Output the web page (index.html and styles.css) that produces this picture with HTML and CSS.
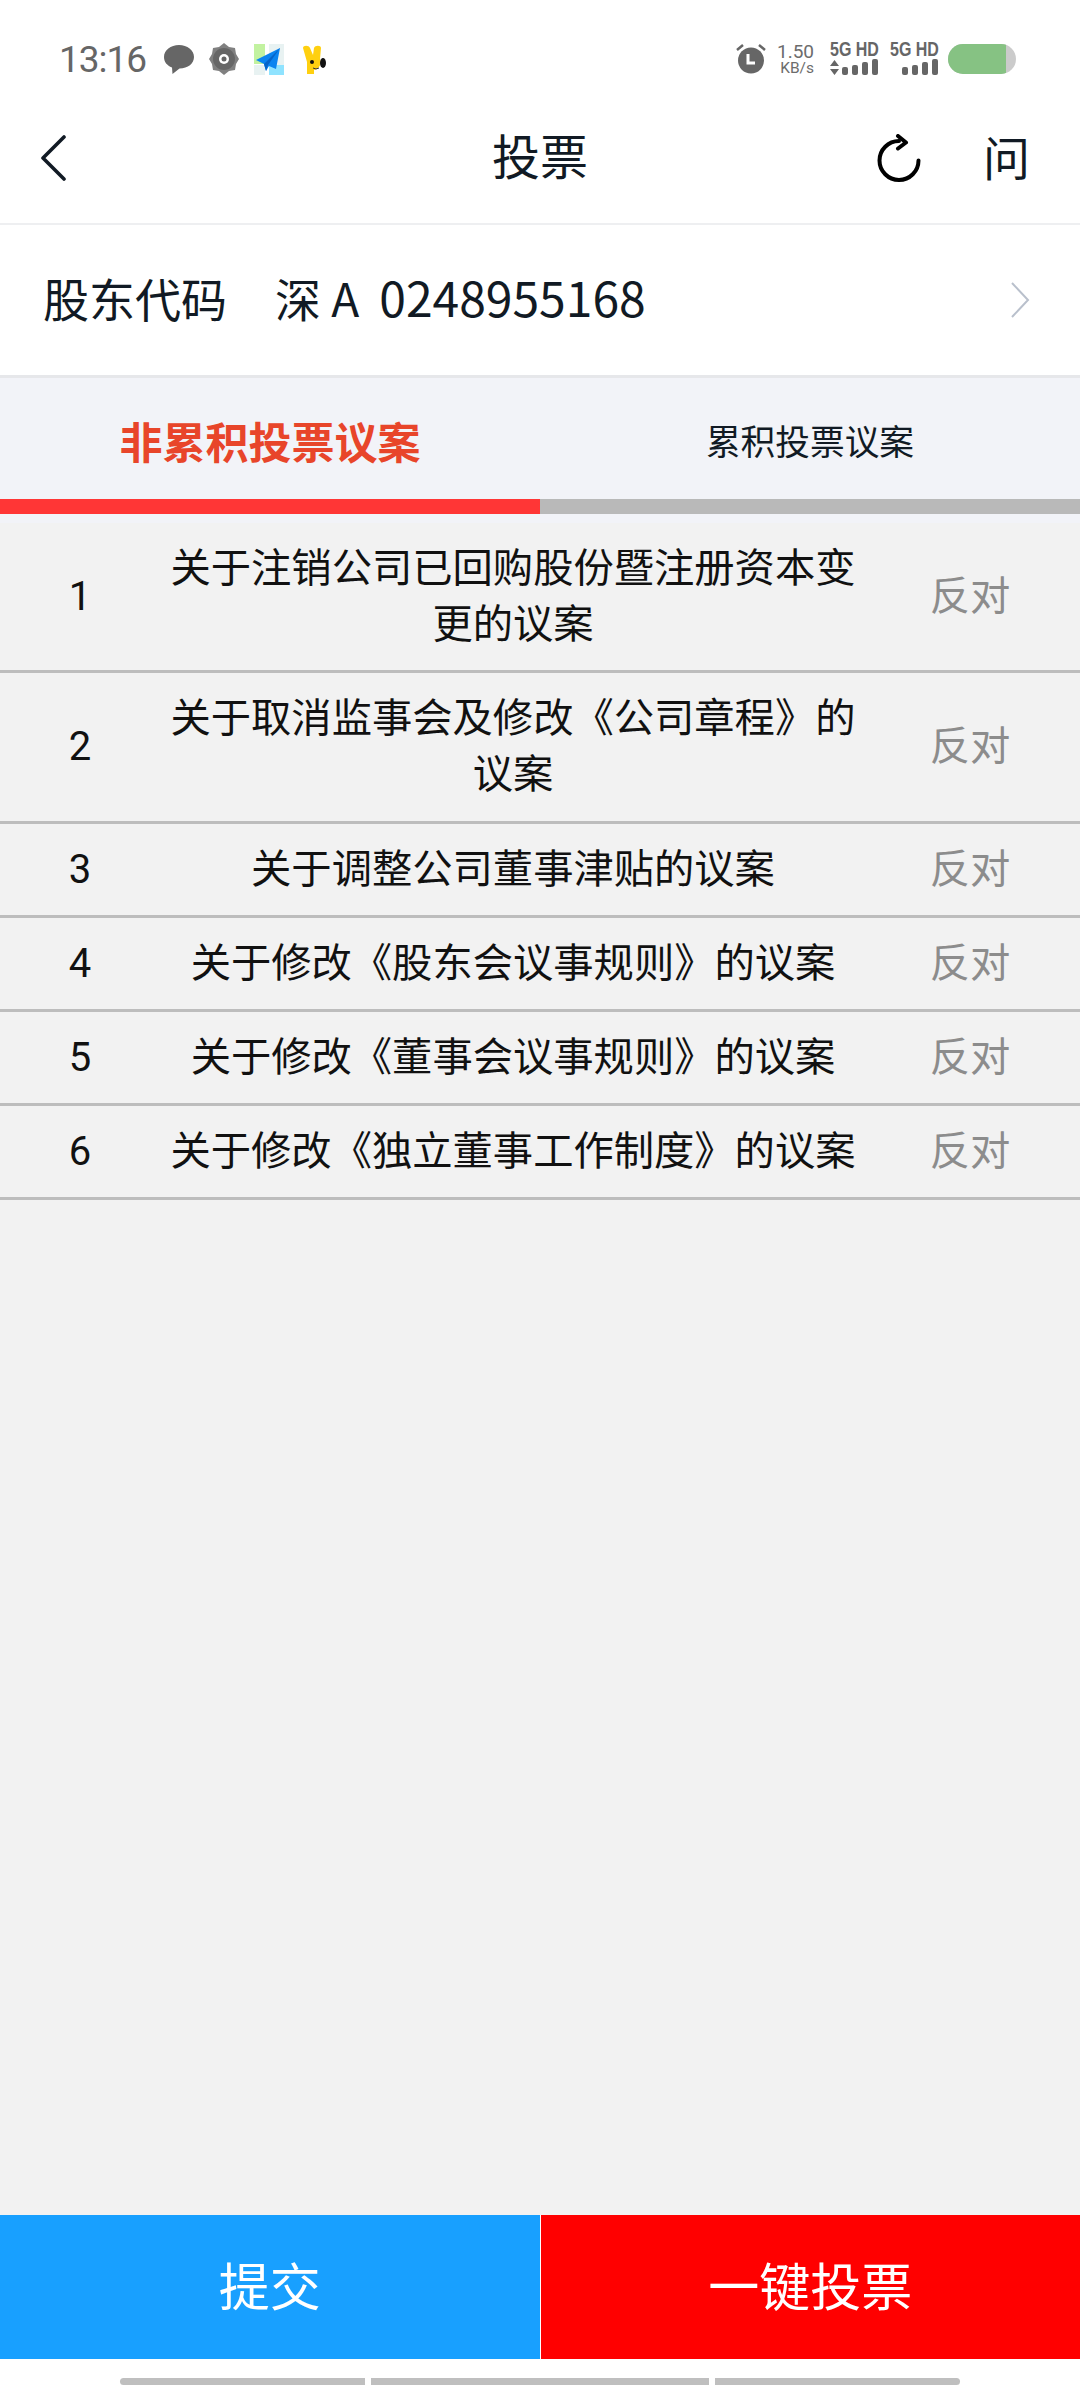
FILE: index.html
```html
<!DOCTYPE html>
<html lang="zh-CN">
<head>
    <meta charset="UTF-8">
    <meta name="viewport" content="width=device-width, initial-scale=1.0">
    <title>投票</title>
    <link rel="stylesheet" href="styles.css">
</head>
<body>
    <div class="status-bar">
        <div class="status-left">
            <span class="time">13:16</span>
            <svg class="ic-chat" width="30" height="29" viewBox="0 0 30 29"><path d="M15 0C6.700 0 0 5 0 12c0 5 3 8.500 8 10.500L8.500 29l7-5.500C24 23.500 30 18.500 30 12 30 5 23.300 0 15 0z" fill="#666"/></svg>
            <svg class="ic-gear" width="30" height="32" viewBox="0 0 30 32"><path d="M15 0l5 4 6 1 1 6 3 5-3 5-1 6-6 1-5 4-5-4-6-1-1-6-3-5 3-5 1-6 6-1z" fill="#808080"/><circle cx="15" cy="16" r="11" fill="#666"/><circle cx="15" cy="16" r="5" fill="#fff"/><circle cx="15" cy="16" r="2.500" fill="#666"/></svg>
            <svg class="ic-map" width="30" height="31" viewBox="0 0 30 31"><rect width="11" height="20" fill="#c2f2a0"/><rect x="15" width="15" height="21" fill="#e8f2f2"/><rect y="21" width="11" height="10" fill="#e8f2f2"/><rect x="15" y="21" width="15" height="10" fill="#8fe3ff"/><path d="M26 4L2 16l8 4 2 7 3-5 7 3z" fill="#0a84f0"/><path d="M26 4L10 20l2 7 2-6z" fill="#0664c8"/></svg>
            <svg class="ic-rabbit" width="23" height="29" viewBox="0 0 23 29"><path d="M0 3c0-3 6-3 7 0l3 7 1-7c1-3 7-3 7 0l-1 11c2 5-1 10-6 11v4H4V17z" fill="#ffd010"/><ellipse cx="20" cy="18" rx="3" ry="5" fill="#111"/><circle cx="9" cy="17" r="2" fill="#111"/><path d="M10 23q3 2 6 0" fill="none" stroke="#333" stroke-width="1"/></svg>
        </div>
        <div class="status-right">
            <svg width="30" height="30" viewBox="0 0 30 30"><circle cx="15" cy="16.500" r="13" fill="#666"/><path d="M12 10v9h7" fill="none" stroke="#fff" stroke-width="3"/><path d="M1 6l6-5M29 6l-6-5" stroke="#666" stroke-width="2.500"/></svg>
            <div class="speed"><span class="speed-num">1.50</span><span class="speed-unit">KB/s</span></div>
            <div class="sim sim-first">
                <span class="sim-label">5G HD</span>
                <div class="sim-row">
                    <svg width="9" height="15" viewBox="0 0 9 15"><path d="M4.500 0L9 6H0zM4.500 15L0 9h9z" fill="#666"/></svg>
                    <div class="signal"><i class="s1"></i><i class="s2"></i><i class="s3"></i><i class="s4"></i></div>
                </div>
            </div>
            <div class="sim">
                <span class="sim-label">5G HD</span>
                <div class="sim-row sim-end">
                    <div class="signal"><i class="s1"></i><i class="s2"></i><i class="s3"></i><i class="s4"></i></div>
                </div>
            </div>
            <div class="battery"><div class="battery-fill"></div></div>
        </div>
    </div>

    <div class="nav-bar">
        <svg class="back" width="26" height="46" viewBox="0 0 26 46"><path d="M24 2L3 23l21 21" fill="none" stroke="#111a24" stroke-width="3.600" stroke-linecap="round" stroke-linejoin="round"/></svg>
        <h1 class="nav-title">投票</h1>
        <div class="nav-right">
            <svg class="refresh" width="44" height="48" viewBox="0 0 44 48"><path d="M22 7A19.500 19.500 0 1 0 41.500 26.500" fill="none" stroke="#000" stroke-width="4" stroke-linecap="round"/><path d="M21 2l8 6.500-8 6" fill="none" stroke="#000" stroke-width="4" stroke-linecap="round" stroke-linejoin="round"/></svg>
            <span class="nav-help">问</span>
        </div>
    </div>

    <div class="account">
        <div class="account-text">
            <span class="account-label">股东代码</span>
            <span class="account-market">深 A</span>
            <span class="account-no">0248955168</span>
        </div>
        <svg class="more" width="20" height="36" viewBox="0 0 20 36"><path d="M2 1l16 17L2 35" fill="none" stroke="#b9c0cc" stroke-width="2"/></svg>
    </div>

    <div class="tabs">
        <div class="tab tab-active">非累积投票议案</div>
        <div class="tab">累积投票议案</div>
    </div>
    <div class="tab-line"><div class="tab-line-on"></div></div>

    <div class="list">
        <div class="row row-first">
            <span class="row-no">1</span>
            <span class="row-text">关于注销公司已回购股份暨注册资本变更的议案</span>
            <span class="row-vote">反对</span>
        </div>
        <div class="row row-tall">
            <span class="row-no">2</span>
            <span class="row-text">关于取消监事会及修改《公司章程》的议案</span>
            <span class="row-vote">反对</span>
        </div>
        <div class="row">
            <span class="row-no">3</span>
            <span class="row-text">关于调整公司董事津贴的议案</span>
            <span class="row-vote">反对</span>
        </div>
        <div class="row">
            <span class="row-no">4</span>
            <span class="row-text">关于修改《股东会议事规则》的议案</span>
            <span class="row-vote">反对</span>
        </div>
        <div class="row">
            <span class="row-no">5</span>
            <span class="row-text">关于修改《董事会议事规则》的议案</span>
            <span class="row-vote">反对</span>
        </div>
        <div class="row">
            <span class="row-no">6</span>
            <span class="row-text">关于修改《独立董事工作制度》的议案</span>
            <span class="row-vote">反对</span>
        </div>
    </div>

    <div class="actions">
        <div class="btn btn-submit">提交</div>
        <div class="btn btn-all">一键投票</div>
    </div>

    <div class="home-bar">
        <i class="home-a"></i><i class="home-b"></i><i class="home-c"></i>
    </div>
</body>
</html>
```

FILE: styles.css
```css
* {
    box-sizing: border-box;
}

body {
    font-family: "Noto Sans CJK SC", "Noto Sans", sans-serif;
    background-color: #fff;
    margin: 0;
    padding: 0;
    width: 1080px;
    height: 2388px;
    display: flex;
    flex-direction: column;
    color: #111a24;
}

.status-bar {
    height: 90px;
    padding: 44px 64px 0 59px;
    display: flex;
    justify-content: space-between;
    align-items: flex-start;
}

.status-left {
    display: flex;
    align-items: center;
    height: 30px;
}

.time {
    font-family: Roboto, sans-serif;
    font-size: 37px;
    letter-spacing: -1px;
    color: #666;
    width: 105px;
}

.ic-gear,
.ic-map {
    margin-left: 15px;
}

.ic-rabbit {
    margin-left: 19px;
}

.status-right {
    display: flex;
    align-items: center;
    height: 30px;
}

.speed {
    margin-left: 12px;
    width: 36px;
    display: flex;
    flex-direction: column;
    align-items: flex-end;
    font-family: Roboto, sans-serif;
    color: #6c6c6c;
}

.speed-num {
    font-size: 19px;
    line-height: 18px;
}

.speed-unit {
    font-size: 15.500px;
    line-height: 14px;
}

.sim {
    margin-left: 11px;
    width: 49px;
    display: flex;
    flex-direction: column;
    color: #666;
}

.sim-first {
    margin-left: 16px;
}

.sim-label {
    font-family: "Liberation Sans", sans-serif;
    font-size: 16px;
    font-weight: bold;
    line-height: 14px;
    white-space: nowrap;
    margin-top: -1px;
    transform: scaleY(1.25);
}

.sim-row {
    display: flex;
    justify-content: space-between;
    align-items: flex-end;
    margin-top: 2px;
    padding-right: 1px;
}

.sim-end {
    justify-content: flex-end;
}

.signal {
    display: flex;
    align-items: flex-end;
    gap: 4px;
}

.signal i {
    display: block;
    width: 6px;
    background-color: #666;
    border-radius: 2px;
}

.signal .s1 { height: 8px; }
.signal .s2 { height: 10px; }
.signal .s3 { height: 13px; }
.signal .s4 { height: 16px; }

.battery {
    margin-left: 9px;
    width: 68px;
    height: 30px;
    border-radius: 15px;
    background-color: #cbcbcb;
    overflow: hidden;
}

.battery-fill {
    width: 58px;
    height: 100%;
    background-color: #86c283;
}

.nav-bar {
    height: 135px;
    padding: 2px 50px 0 50px;
    display: grid;
    grid-template-columns: 1fr auto 1fr;
    align-items: center;
    border-bottom: 2px solid #eeeff1;
}

.back {
    margin-left: -10px;
}

.nav-title {
    margin: 0 0 6px 0;
    font-size: 48px;
    font-weight: 400;
    line-height: 1.2;
}

.nav-right {
    display: flex;
    justify-content: flex-end;
    align-items: center;
}

.refresh {
    margin-right: 62px;
}

.nav-help {
    font-size: 47px;
    line-height: 1;
    margin-bottom: 4px;
}

.account {
    height: 153px;
    padding: 0 50px 0 43px;
    display: flex;
    align-items: center;
    border-bottom: 3px solid #e6e7ea;
}

.account-text {
    flex: 1;
    display: flex;
    align-items: baseline;
    font-size: 46px;
    padding-bottom: 8px;
}

.account-market {
    margin-left: 48px;
}

.account-no {
    margin-left: 20px;
    font-size: 48px;
}

.tabs {
    height: 121px;
    display: flex;
    background-color: #f2f3f8;
}

.tab {
    width: 50%;
    display: flex;
    justify-content: center;
    align-items: center;
    font-size: 34.700px;
    padding-top: 2px;
}

.tab-active {
    font-size: 43px;
    font-weight: bold;
    color: #e8452a;
}

.tab-line {
    height: 24px;
    background-color: #b9b9b9;
    border-bottom: 9px solid #f2f3f8;
}

.tab-line-on {
    width: 540px;
    height: 15px;
    background-color: #ff3636;
}

.list {
    flex: 1;
    background-color: #f2f2f2;
}

.row {
    height: 94px;
    display: grid;
    grid-template-columns: 160px 706px 208px;
    align-items: center;
    text-align: center;
    font-size: 40.300px;
    line-height: 56px;
    color: #111;
    border-bottom: 3px solid #bdbdbd;
}

.row-first {
    height: 150px;
}

.row-tall {
    height: 151px;
}

.row-text,
.row-vote {
    padding-bottom: 8px;
}

.row-no {
    font-family: Roboto, sans-serif;
    font-size: 40px;
}

.row-vote {
    color: #8c8c8c;
}

.actions {
    height: 144px;
    display: flex;
    color: #fff;
    font-size: 51px;
}

.btn {
    flex: 1;
    display: flex;
    justify-content: center;
    align-items: center;
    padding-bottom: 6px;
}

.btn-submit {
    background-color: #18a0ff;
    border-right: 1px solid #fff;
}

.btn-all {
    background-color: #ff0000;
}

.home-bar {
    height: 29px;
    padding: 19px 120px 3px;
    display: flex;
    justify-content: space-between;
}

.home-bar i {
    display: block;
    background-color: #bfbfbf;
}

.home-a {
    width: 245px;
    border-radius: 4px 0 0 4px;
}

.home-b {
    width: 338px;
}

.home-c {
    width: 245px;
    border-radius: 0 4px 4px 0;
}
```
